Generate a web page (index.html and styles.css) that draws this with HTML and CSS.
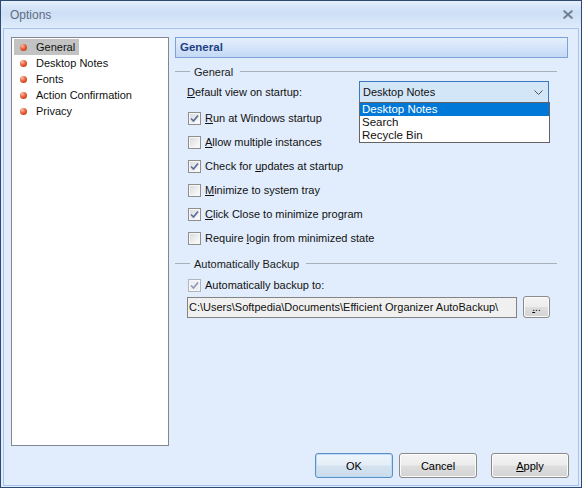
FILE: index.html
```html
<!DOCTYPE html>
<html>
<head>
<meta charset="utf-8">
<title>Options</title>
<link rel="stylesheet" href="styles.css">
</head>
<body>
<div class="window">
  <div class="titlebar">
    <span class="title">Options</span>
    <svg class="close" width="10" height="9" viewBox="0 0 10 9">
      <path d="M1 1 L9 8 M9 1 L1 8" stroke="#a3adbb" stroke-width="2.4" stroke-linecap="square"/>
      <path d="M1 1 L9 8 M9 1 L1 8" stroke="#66738a" stroke-width="1.1"/>
    </svg>
  </div>
  <div class="frame">
    <div class="main">
      <ul class="tree">
        <li class="item sel"><span class="dot"></span><span>General</span></li>
        <li class="item"><span class="dot"></span><span>Desktop Notes</span></li>
        <li class="item"><span class="dot"></span><span>Fonts</span></li>
        <li class="item"><span class="dot"></span><span>Action Confirmation</span></li>
        <li class="item"><span class="dot"></span><span>Privacy</span></li>
      </ul>
      <div class="page">
        <div class="header">General</div>
        <div class="legend"><span class="ln short"></span><span class="lt">General</span><span class="ln long"></span></div>
        <div class="row-combo">
          <span class="flabel"><u>D</u>efault view on startup:</span>
          <div class="combo">
            <span class="ctext">Desktop Notes</span>
            <svg class="chev" width="9" height="5" viewBox="0 0 9 5"><path d="M0.5 0.5 L4.5 4.5 L8.5 0.5" fill="none" stroke="#505050" stroke-width="1"/></svg>
            <ul class="dropdown">
              <li class="opt hl">Desktop Notes</li>
              <li class="opt">Search</li>
              <li class="opt">Recycle Bin</li>
            </ul>
          </div>
        </div>
        <div class="checks">
          <div class="chk on"><span class="box"><svg width="11" height="11" viewBox="0 0 11 11"><path d="M2 5.5 L4.5 8 L9 2.5" fill="none" stroke="#5a6c99" stroke-width="1.7"/></svg></span><span><u>R</u>un at Windows startup</span></div>
          <div class="chk"><span class="box"></span><span><u>A</u>llow multiple instances</span></div>
          <div class="chk on"><span class="box"><svg width="11" height="11" viewBox="0 0 11 11"><path d="M2 5.5 L4.5 8 L9 2.5" fill="none" stroke="#5a6c99" stroke-width="1.7"/></svg></span><span>Check for <u>u</u>pdates at startup</span></div>
          <div class="chk"><span class="box"></span><span><u>M</u>inimize to system tray</span></div>
          <div class="chk on"><span class="box"><svg width="11" height="11" viewBox="0 0 11 11"><path d="M2 5.5 L4.5 8 L9 2.5" fill="none" stroke="#5a6c99" stroke-width="1.7"/></svg></span><span><u>C</u>lick Close to minimize program</span></div>
          <div class="chk"><span class="box"></span><span>Require <u>l</u>ogin from minimized state</span></div>
        </div>
        <div class="legend second"><span class="ln short"></span><span class="lt">Automatically Backup</span><span class="ln long"></span></div>
        <div class="chk backup dis on"><span class="box"><svg width="11" height="11" viewBox="0 0 11 11"><path d="M2 5.5 L4.5 8 L9 2.5" fill="none" stroke="#8e9ab8" stroke-width="1.7"/></svg></span><span>Automatically backup to:</span></div>
        <div class="path-row">
          <div class="pathbox">C:\Users\Softpedia\Documents\Efficient Organizer AutoBackup\</div>
          <button class="btn browse"><u>.</u>..</button>
        </div>
      </div>
    </div>
    <div class="buttons">
      <button class="btn def">OK</button>
      <button class="btn">Cancel</button>
      <button class="btn apply"><u>A</u>pply</button>
    </div>
  </div>
</div>
</body>
</html>
```

FILE: styles.css
```css
* { box-sizing: border-box; }
html, body { margin: 0; padding: 0; }
body {
  width: 582px;
  height: 488px;
  overflow: hidden;
  font-family: "Liberation Sans", Arial, sans-serif;
  font-size: 11px;
  color: #111;
}
.window {
  width: 582px;
  height: 488px;
  border: 1px solid #2e4a73;
  background: #e1edfc;
  display: flex;
  flex-direction: column;
}
.titlebar {
  height: 27px;
  flex: none;
  display: flex;
  align-items: center;
  justify-content: space-between;
  padding: 0 8px 0 9px;
  background: linear-gradient(#e6effb 0%, #d6e5f9 22%, #cddff6 45%, #d6e5f8 75%, #e0ebfa 100%);
}
.title { font-size: 12px; color: #5e6c80; }
.close { display: block; }
.frame {
  flex: 1;
  margin: 0 2px 1px 2px;
  border: 1px solid #a5c3eb;
  display: flex;
  flex-direction: column;
}
.main {
  display: flex;
  padding: 8px 0 0 7px;
  gap: 6px;
}
.tree {
  width: 158px;
  height: 409px;
  margin: 0;
  padding: 1px 2px;
  list-style: none;
  background: #fff;
  border: 1px solid #828790;
  display: flex;
  flex-direction: column;
  align-items: flex-start;
}
.item {
  display: flex;
  align-items: center;
  height: 16px;
  padding: 0 4px 0 6px;
  gap: 9px;
  white-space: nowrap;
}
.item.sel { background: #c3c3c3; }
.dot {
  width: 7px;
  height: 7px;
  border-radius: 50%;
  background: radial-gradient(circle at 35% 30%, #ffc0a4 0%, #e4603a 45%, #a83418 100%);
  flex: none;
}
.page { width: 393px; }
.header {
  height: 21px;
  border: 1px solid #7ba2d9;
  background: linear-gradient(#e5effc, #c4d9f6);
  font-weight: bold;
  color: #1f4185;
  padding-left: 4px;
  line-height: 19px;
  font-size: 11.5px;
}
.legend {
  display: flex;
  align-items: center;
  height: 15px;
  margin-top: 6px;
  width: 382px;
}
.legend .ln { height: 1px; background: #a9b0ba; }
.legend .short { width: 15px; flex: none; }
.legend .long { flex: 1; }
.legend .lt { margin: 0 7px 0 4px; color: #1a1a1a; }
.row-combo {
  display: flex;
  align-items: center;
  margin-top: 2px;
  padding-left: 12px;
  height: 22px;
}
.flabel { width: 172px; flex: none; }
.combo {
  position: relative;
  width: 190px;
  height: 22px;
  border: 1px solid #3a78c2;
  background: #d3e6f8;
  display: flex;
  align-items: center;
  justify-content: space-between;
  padding: 0 5px 0 3px;
}
.chev { display: block; }
.dropdown {
  position: absolute;
  left: -1px;
  top: 100%;
  width: 191px;
  height: 41px;
  margin: 0;
  padding: 0;
  list-style: none;
  background: #fff;
  border: 1px solid #646464;
  z-index: 2;
}
.opt {
  height: 13px;
  line-height: 13px;
  padding-left: 2px;
  font-size: 11.5px;
}
.opt.hl { background: #0078d7; color: #fff; }
.checks { margin-top: 3px; }
.chk {
  display: flex;
  align-items: center;
  height: 24px;
  padding-left: 13px;
  gap: 4px;
  white-space: nowrap;
}
.box {
  width: 13px;
  height: 13px;
  flex: none;
  border: 1px solid #8e8f8f;
  background: linear-gradient(135deg, #d6d8dc 0%, #f4f4f4 70%, #ffffff 100%);
  box-shadow: inset 0 0 0 1px #f6f6f6;
  display: flex;
  align-items: center;
  justify-content: center;
}
.box svg { display: block; }
.legend.second { margin-top: 6px; }
.chk.backup { height: 20px; margin-top: 4px; }
.chk.dis .box { border-color: #b1b6bd; background: #eef0f3; }
.path-row {
  display: flex;
  align-items: flex-start;
  margin-top: 1px;
  padding-left: 12px;
  gap: 6px;
  height: 22px;
}
.pathbox {
  width: 330px;
  height: 21px;
  margin-top: 1px;
  border: 1px solid #838383;
  background: #f0f0f0;
  line-height: 19px;
  padding-left: 1px;
  white-space: nowrap;
  overflow: hidden;
}
.btn {
  font-family: "Liberation Sans", Arial, sans-serif;
  font-size: 11px;
  color: #000;
  border: 1px solid #8a8a8a;
  border-radius: 3px;
  background: linear-gradient(#f4f4f4 0%, #ececec 48%, #dedede 52%, #d3d3d3 100%);
  box-shadow: inset 0 0 0 1px #fbfbfb;
  padding: 0;
  margin: 0;
}
.browse { width: 27px; height: 22px; font-size: 10px; line-height: 12px; padding-top: 2px; }
.buttons {
  display: flex;
  justify-content: flex-end;
  margin-top: auto;
  padding: 0 9px 7px 0;
  gap: 6px;
}
.buttons .btn { width: 78px; height: 25px; }
.buttons .apply { margin-left: 8px; }
.btn.def {
  border-color: #5c8fc6;
  box-shadow: inset 0 0 0 1px #bcdcf6;
  background: linear-gradient(#eef5fb 0%, #e4eef8 48%, #d5e3f0 52%, #cadbec 100%);
}
```
